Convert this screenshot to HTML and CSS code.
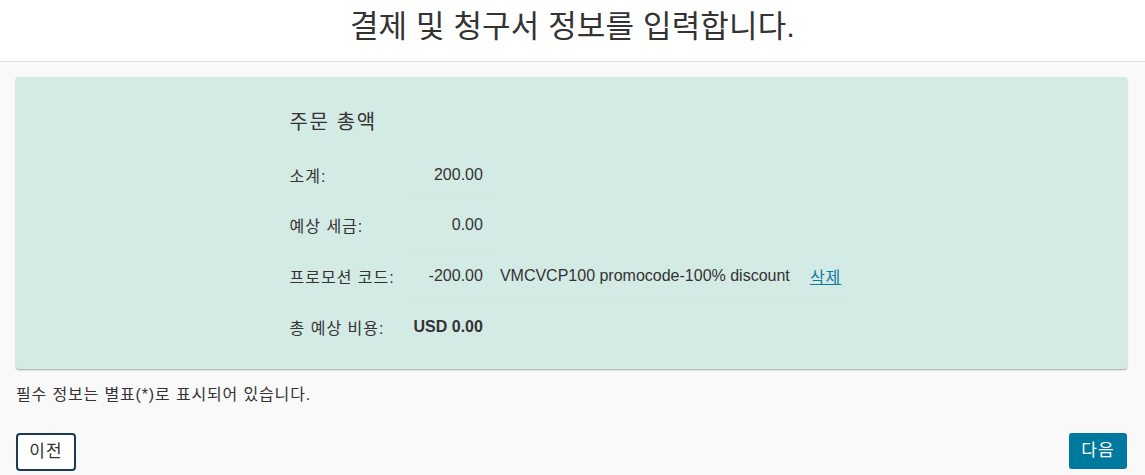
FILE: index.html
```html
<!DOCTYPE html>
<html lang="ko">
<head>
<meta charset="utf-8">
<title>결제 및 청구서 정보</title>
<link rel="stylesheet" href="styles.css">
</head>
<body>
<header class="page-header">
  <h1 class="page-title">결제 및 청구서 정보를 입력합니다.</h1>
</header>
<main class="page-body">
  <section class="summary-card">
    <div class="summary-inner">
      <h2 class="summary-title">주문 총액</h2>
      <table class="summary-table">
        <tbody>
          <tr>
            <th class="label">소계:</th>
            <td class="amount">200.00</td>
          </tr>
          <tr>
            <th class="label">예상 세금:</th>
            <td class="amount">0.00</td>
          </tr>
          <tr class="promo-row">
            <th class="label">프로모션 코드:</th>
            <td class="amount">-200.00</td>
            <td class="desc">VMCVCP100 promocode-100% discount</td>
            <td class="action"><a href="#" class="link">삭제</a></td>
          </tr>
          <tr class="total-row">
            <th class="label">총 예상 비용:</th>
            <td class="amount total">USD 0.00</td>
          </tr>
        </tbody>
      </table>
    </div>
  </section>
  <p class="note">필수 정보는 별표(*)로 표시되어 있습니다.</p>
  <div class="actions">
    <button class="btn btn-secondary" type="button">이전</button>
    <button class="btn btn-primary" type="button">다음</button>
  </div>
</main>
</body>
</html>
```
FILE: styles.css
```css
* { box-sizing: border-box; }
html, body { margin: 0; padding: 0; }
body {
  font-family: "Liberation Sans", "Noto Sans CJK KR", Arial, sans-serif;
  color: #333;
  background: #f9f9f9;
  height: 475px;
  overflow: hidden;
}
.page-header {
  background: #fff;
  border-bottom: 1px solid #e2e2e2;
  height: 62px;
  display: flex;
  align-items: center;
  justify-content: center;
}
.page-title {
  margin: 0;
  font-size: 31px;
  letter-spacing: 0.15px;
  font-weight: 400;
  line-height: 40px;
  color: #333;
  padding-bottom: 8px;
}
.page-body {
  padding: 15px 18px 0 16px;
}
.summary-card {
  background: #d4eae5;
  border-radius: 3px;
  box-shadow: 0 1px 2px rgba(0, 0, 0, 0.35);
  padding: 31px 0 16px;
  height: 292px;
}
.summary-inner {
  width: 564px;
  margin: 0 auto;
}
.summary-title {
  margin: 0 0 14px;
  font-size: 20px;
  letter-spacing: 1.6px;
  font-weight: 400;
  line-height: 28px;
}
.summary-table {
  border-collapse: separate;
  border-spacing: 2px 0;
  margin-left: -2px;
  font-size: 16px;
}
.summary-table th,
.summary-table td {
  height: 50px;
  padding: 0 8px;
  vertical-align: middle;
  font-weight: 400;
  white-space: nowrap;
}
.summary-table .promo-row th,
.summary-table .promo-row td { height: 52px; }
.summary-table th.label {
  text-align: left;
  padding: 0 8px 0 0;
  width: 114px;
  font-size: 16px;
  letter-spacing: 1px;
}
.summary-table td.amount {
  text-align: right;
  width: 84px;
}
.summary-table tr:not(.total-row) td {
  border-bottom: 1px solid #e3dede;
}
.summary-table td.desc { padding: 0 8px 0 7px; width: 306px; }
.summary-table td.action { padding: 0 8px 0 9px; letter-spacing: 1px; }
.summary-table td.total { font-weight: 700; }
.link {
  color: #0e7c9f;
  text-decoration: underline;
}
.note {
  margin: 15px 0 0;
  font-size: 16px;
  letter-spacing: 0.85px;
  line-height: 22px;
}
.actions {
  margin-top: 27px;
  display: flex;
  justify-content: space-between;
  align-items: flex-start;
}
.btn {
  font-family: inherit;
  font-size: 17px;
  border-radius: 4px;
  cursor: pointer;
  line-height: 20px;
}
.btn-secondary {
  background: #fff;
  color: #333;
  border: 2px solid #1c3a58;
  height: 38px;
  width: 60px;
  padding: 0;
  letter-spacing: 1px;
}
.btn-primary {
  background: #00799f;
  color: #fff;
  border: 0;
  height: 36px;
  width: 58px;
  padding: 0;
  border-radius: 3px;
  letter-spacing: 1px;
}
```
